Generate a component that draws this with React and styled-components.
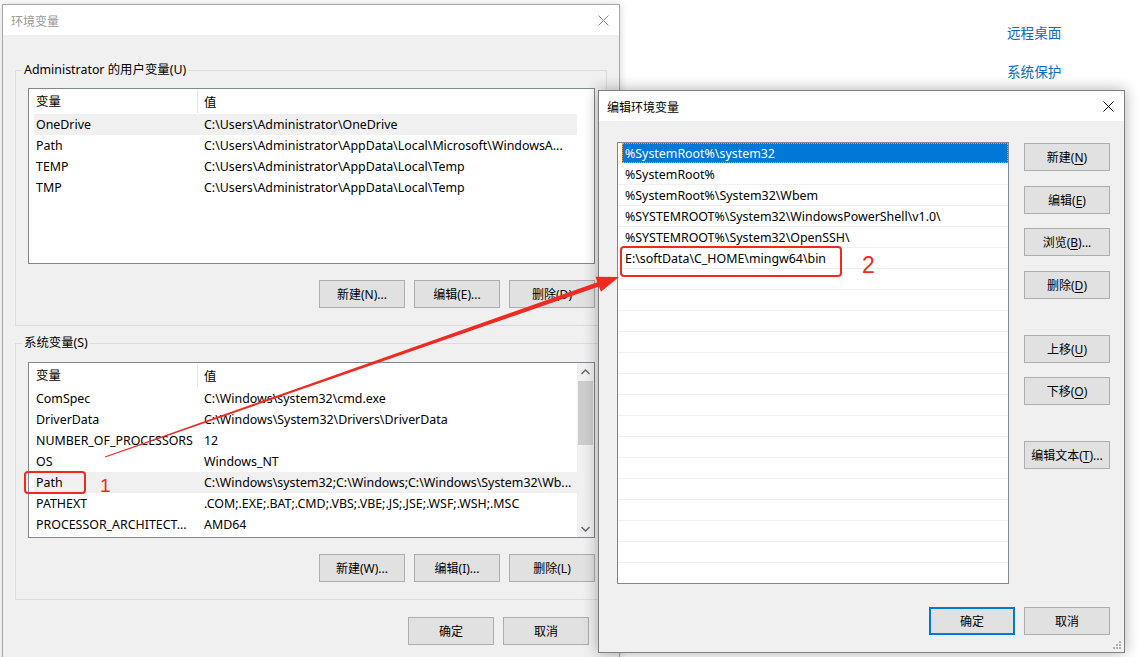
import React from "react";
import styled, { createGlobalStyle } from "styled-components";

const GlobalStyle = createGlobalStyle`
  html, body {
    margin: 0;
    padding: 0;
    background: #ffffff;
  }
  body {
    font-family: "Segoe UI", "Noto Sans", "Noto Sans CJK SC", sans-serif;
    font-size: 12.4px;
    color: #000000;
  }
  * {
    box-sizing: border-box;
  }
`;

const userVars = [
  ["OneDrive", "C:\\Users\\Administrator\\OneDrive"],
  ["Path", "C:\\Users\\Administrator\\AppData\\Local\\Microsoft\\WindowsA..."],
  ["TEMP", "C:\\Users\\Administrator\\AppData\\Local\\Temp"],
  ["TMP", "C:\\Users\\Administrator\\AppData\\Local\\Temp"],
];

const systemVars = [
  ["ComSpec", "C:\\Windows\\system32\\cmd.exe"],
  ["DriverData", "C:\\Windows\\System32\\Drivers\\DriverData"],
  ["NUMBER_OF_PROCESSORS", "12"],
  ["OS", "Windows_NT"],
  ["Path", "C:\\Windows\\system32;C:\\Windows;C:\\Windows\\System32\\Wb..."],
  ["PATHEXT", ".COM;.EXE;.BAT;.CMD;.VBS;.VBE;.JS;.JSE;.WSF;.WSH;.MSC"],
  ["PROCESSOR_ARCHITECT...", "AMD64"],
];

const paths = [
  "%SystemRoot%\\system32",
  "%SystemRoot%",
  "%SystemRoot%\\System32\\Wbem",
  "%SYSTEMROOT%\\System32\\WindowsPowerShell\\v1.0\\",
  "%SYSTEMROOT%\\System32\\OpenSSH\\",
  "E:\\softData\\C_HOME\\mingw64\\bin",
];

function CloseIcon({ color }) {
  return (
    <svg width="11" height="11" viewBox="0 0 11 11">
      <path d="M0.5 0.5 L10.5 10.5 M10.5 0.5 L0.5 10.5" stroke={color} strokeWidth="1" />
    </svg>
  );
}

function Chevron({ up }) {
  return (
    <svg width="9" height="6" viewBox="0 0 9 6">
      <path
        d={up ? "M0.5 5 L4.5 1 L8.5 5" : "M0.5 1 L4.5 5 L8.5 1"}
        stroke="#606060"
        strokeWidth="1.3"
        fill="none"
      />
    </svg>
  );
}

function VarList({ rows, selected, scroll }) {
  return (
    <ListBox>
      <ListMain>
        <HeaderRow>
          <HeaderName>变量</HeaderName>
          <HeaderValue>值</HeaderValue>
        </HeaderRow>
        {rows.map(([name, value], i) => (
          <VarRow key={name} $selected={i === selected}>
            <VarName>{name}</VarName>
            <VarValue>{value}</VarValue>
          </VarRow>
        ))}
      </ListMain>
      {scroll ? (
        <Scrollbar>
          <ScrollArrow><Chevron up /></ScrollArrow>
          <ScrollThumb />
          <ScrollTrack />
          <ScrollArrow><Chevron /></ScrollArrow>
        </Scrollbar>
      ) : (
        <ScrollGap />
      )}
    </ListBox>
  );
}

export default function App() {
  const emptyRows = Array.from({ length: 21 - paths.length });

  return (
    <>
      <GlobalStyle />
      <Desktop>
        <SettingsPage>
          <SettingsLink>远程桌面</SettingsLink>
          <SettingsLink>系统保护</SettingsLink>
        </SettingsPage>

        <EnvWindow>
          <TitleBar>
            <Title $inactive>环境变量</Title>
            <CloseIcon color="#8a8a8a" />
          </TitleBar>
          <EnvBody>
            <Group>
              <GroupLabel>Administrator 的用户变量(U)</GroupLabel>
              <VarList rows={userVars} selected={0} />
              <ButtonRow>
                <Button>新建(N)...</Button>
                <Button>编辑(E)...</Button>
                <Button>删除(D)</Button>
              </ButtonRow>
            </Group>
            <Group $second>
              <GroupLabel>系统变量(S)</GroupLabel>
              <VarList rows={systemVars} selected={4} scroll />
              <ButtonRow>
                <Button>新建(W)...</Button>
                <Button>编辑(I)...</Button>
                <Button>删除(L)</Button>
              </ButtonRow>
            </Group>
            <DialogFooter>
              <Button>确定</Button>
              <Button>取消</Button>
            </DialogFooter>
          </EnvBody>
        </EnvWindow>

        <EditWindow>
          <TitleBar>
            <Title>编辑环境变量</Title>
            <CloseIcon color="#000000" />
          </TitleBar>
          <EditBody>
            <EditTop>
              <PathList>
                {paths.map((p, i) => (
                  <PathRow key={p}>
                    <PathText $selected={i === 0}>{p}</PathText>
                  </PathRow>
                ))}
                {emptyRows.map((_, i) => (
                  <PathRow key={"e" + i}>
                    <PathText />
                  </PathRow>
                ))}
              </PathList>
              <SideButtons>
                <Button>新建(<u>N</u>)</Button>
                <Button>编辑(<u>E</u>)</Button>
                <Button>浏览(<u>B</u>)...</Button>
                <Button>删除(<u>D</u>)</Button>
                <Button $spaced>上移(<u>U</u>)</Button>
                <Button>下移(<u>O</u>)</Button>
                <Button $spaced>编辑文本(<u>T</u>)...</Button>
              </SideButtons>
            </EditTop>
            <DialogFooter $edit>
              <Button $default>确定</Button>
              <Button>取消</Button>
            </DialogFooter>
          </EditBody>
          <Grip>
            <svg width="10" height="10" viewBox="0 0 10 10">
              {[[8, 2], [8, 5], [5, 5], [8, 8], [5, 8], [2, 8]].map(([x, y]) => (
                <rect key={x + "-" + y} x={x - 1} y={y - 1} width="2" height="2" fill="#b0b0b0" />
              ))}
            </svg>
          </Grip>
        </EditWindow>

        <Marks viewBox="0 0 1139 657">
          <rect x="25" y="472" width="60" height="21" rx="3" fill="none" stroke="#f02a22" strokeWidth="2" />
          <text x="100" y="492" fill="#f02a22" fontSize="19" fontFamily="Liberation Sans, sans-serif">1</text>
          <rect x="621" y="247" width="220" height="29" rx="3" fill="none" stroke="#f02a22" strokeWidth="2" />
          <text x="862" y="273" fill="#f02a22" fontSize="23" fontFamily="Liberation Sans, sans-serif">2</text>
          <polygon
            points="619,277 600.9,291.8 598.9,286.4 105.1,457.4 104.9,456.6 597.3,282.2 595.6,276.8"
            fill="#f02a22"
          />
        </Marks>
      </Desktop>
    </>
  );
}

const Desktop = styled.div`
  position: relative;
  width: 1139px;
  height: 657px;
  overflow: hidden;
  background: #ffffff;
`;

const SettingsPage = styled.div`
  position: absolute;
  inset: 0;
  display: flex;
  flex-direction: column;
  align-items: flex-start;
  gap: 19px;
  padding: 22px 0 0 1007px;
`;

const SettingsLink = styled.span`
  font-family: "Noto Sans CJK SC", sans-serif;
  font-size: 13.6px;
  line-height: 20px;
  color: #0b6cc4;
`;

const EnvWindow = styled.div`
  position: absolute;
  left: 2px;
  top: 4px;
  width: 618px;
  height: 680px;
  display: flex;
  flex-direction: column;
  background: #f0f0f0;
  border: 1px solid #a8a8a8;
  box-shadow: 0 0 8px rgba(0, 0, 0, 0.18);
`;

const EditWindow = styled.div`
  position: absolute;
  left: 598px;
  top: 90px;
  width: 527px;
  height: 563px;
  display: flex;
  flex-direction: column;
  background: #f0f0f0;
  border: 1px solid #808080;
  box-shadow: 0 0 14px rgba(0, 0, 0, 0.32);
`;

const TitleBar = styled.div`
  flex: none;
  height: 30px;
  display: flex;
  align-items: center;
  justify-content: space-between;
  padding: 0 10px 0 8px;
  background: #ffffff;
`;

const Title = styled.span`
  font-family: "Noto Sans CJK SC", sans-serif;
  font-size: 12px;
  color: ${p => (p.$inactive ? "#9a9a9a" : "#000000")};
`;

const EnvBody = styled.div`
  display: flex;
  flex-direction: column;
  padding: 35px 12px 0 12px;
`;

const Group = styled.div`
  position: relative;
  margin-top: ${p => (p.$second ? "17px" : "0")};
  padding: ${p => (p.$second ? "18px" : "17px")} 11px 17px 12px;
  border: 1px solid #dcdcdc;
`;

const GroupLabel = styled.span`
  position: absolute;
  top: -9px;
  left: 6px;
  padding: 0 2px;
  line-height: 16px;
  background: #f0f0f0;
`;

const ListBox = styled.div`
  display: flex;
  height: 176px;
  background: #ffffff;
  border: 1px solid #828790;
  overflow: hidden;
`;

const ListMain = styled.div`
  flex: 1;
  padding-left: 5px;
`;

const HeaderRow = styled.div`
  display: flex;
  height: 25px;
  align-items: center;
`;

const HeaderName = styled.div`
  width: 164px;
  height: 23px;
  line-height: 23px;
  padding-left: 2px;
  border-right: 1px solid #e5e5e5;
`;

const HeaderValue = styled.div`
  padding-left: 6px;
`;

const VarRow = styled.div`
  display: flex;
  height: 21px;
  line-height: 21px;
  white-space: nowrap;
  background: ${p => (p.$selected ? "#f0f0f0" : "transparent")};
`;

const VarName = styled.div`
  flex: none;
  width: 170px;
  padding-left: 2px;
  overflow: hidden;
`;

const VarValue = styled.div`
  flex: 1;
  overflow: hidden;
`;

const ScrollGap = styled.div`
  width: 17px;
`;

const Scrollbar = styled.div`
  width: 17px;
  display: flex;
  flex-direction: column;
  background: #f0f0f0;
`;

const ScrollArrow = styled.div`
  height: 17px;
  display: flex;
  align-items: center;
  justify-content: center;
`;

const ScrollThumb = styled.div`
  height: 64px;
  margin: 1px 1px 0;
  background: #cdcdcd;
`;

const ScrollTrack = styled.div`
  flex: 1;
`;

const ButtonRow = styled.div`
  display: flex;
  justify-content: flex-end;
  gap: 9px;
  margin-top: 16px;
`;

const DialogFooter = styled.div`
  display: flex;
  justify-content: flex-end;
  gap: 9px;
  margin-top: ${p => (p.$edit ? "23px" : "17px")};
  margin-right: ${p => (p.$edit ? "0" : "18px")};
`;

const Button = styled.button`
  width: 86px;
  height: 28px;
  margin-top: ${p => (p.$spaced ? "21.5px" : "0")};
  padding: 0;
  font: inherit;
  font-size: 12px;
  color: #000000;
  background: #e1e1e1;
  border: ${p => (p.$default ? "2px solid #0078d7" : "1px solid #adadad")};
  white-space: nowrap;
  u {
    text-underline-offset: 2px;
  }
`;

const EditBody = styled.div`
  flex: 1;
  display: flex;
  flex-direction: column;
  padding: 21px 14px 17px 18px;
`;

const EditTop = styled.div`
  display: flex;
  gap: 15px;
`;

const PathList = styled.div`
  width: 392px;
  height: 442px;
  background: #ffffff;
  border: 1px solid #828790;
  overflow: hidden;
`;

const PathRow = styled.div`
  display: flex;
  height: 21px;
  padding-left: 4px;
  border-bottom: 1px solid #f0f0f0;
`;

const PathText = styled.div`
  flex: 1;
  height: 20px;
  padding-top: 2px;
  padding-left: 3px;
  line-height: 18px;
  white-space: nowrap;
  color: ${p => (p.$selected ? "#ffffff" : "#000000")};
  background: ${p => (p.$selected ? "#0078d7" : "transparent")};
  outline: ${p => (p.$selected ? "1px dotted #f0a050" : "none")};
  outline-offset: -1px;
`;

const SideButtons = styled.div`
  display: flex;
  flex-direction: column;
  gap: 14.5px;
  padding-top: 1px;
`;

const Grip = styled.div`
  position: absolute;
  right: 2px;
  bottom: 2px;
  line-height: 0;
`;

const Marks = styled.svg`
  position: absolute;
  left: 0;
  top: 0;
  width: 1139px;
  height: 657px;
  pointer-events: none;
`;
